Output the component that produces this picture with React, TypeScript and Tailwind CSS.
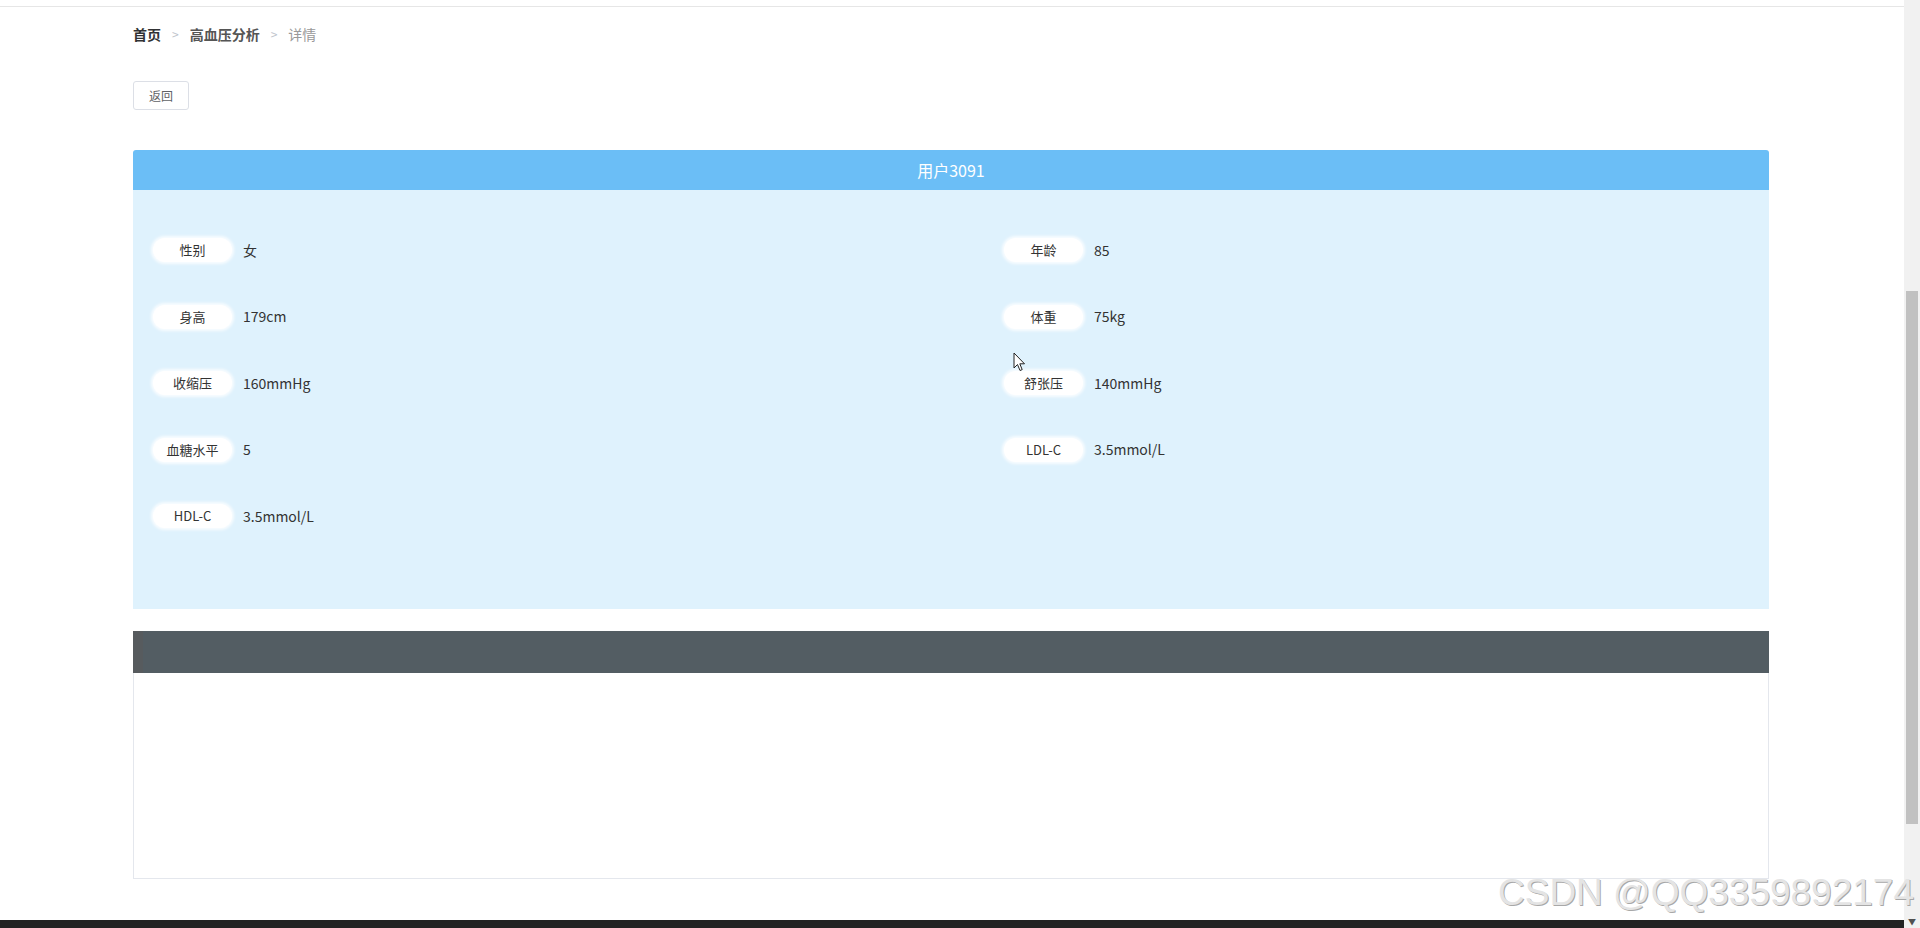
import React from "react";

const rows: [string, string][][] = [
  [["性别", "女"], ["年龄", "85"]],
  [["身高", "179cm"], ["体重", "75kg"]],
  [["收缩压", "160mmHg"], ["舒张压", "140mmHg"]],
  [["血糖水平", "5"], ["LDL-C", "3.5mmol/L"]],
  [["HDL-C", "3.5mmol/L"]],
];

function Item({ label, value }: { label: string; value: string }) {
  return (
    <div className="flex items-center h-[24px]">
      <div className="w-[79px] h-[24px] rounded-full bg-white shadow-[0_0_3px_2px_rgba(255,255,255,0.8)] flex items-center justify-center text-[13px] text-[#333]">
        {label}
      </div>
      <div className="ml-[11px] text-[14px] text-[#333]">{value}</div>
    </div>
  );
}

export default function App() {
  return (
    <div
      className="relative w-[1920px] h-[928px] overflow-hidden bg-white flex"
      style={{ fontFamily: '"Noto Sans CJK SC", "Noto Sans", sans-serif' }}
    >
      <div className="flex-1 flex flex-col">
        <div className="h-[7px] border-b border-[#e6e6e6]" />
        <div className="pl-[133px] pr-[135px] flex flex-col">
          <div className="mt-[19px] h-[16px] flex items-center text-[14px] leading-none">
            <span className="font-bold text-[#303133]">首页</span>
            <span className="mx-[11px] text-[#c0c4cc] text-[12px]">&gt;</span>
            <span className="font-bold text-[#555]">高血压分析</span>
            <span className="mx-[11px] text-[#c0c4cc] text-[12px]">&gt;</span>
            <span className="text-[#999]">详情</span>
          </div>
          <div className="mt-[39px]">
            <button className="h-[29px] w-[56px] border border-[#dcdfe6] rounded-[3px] bg-white text-[12px] text-[#606266] flex items-center justify-center">
              返回
            </button>
          </div>
          <div className="mt-[40px] h-[40px] bg-[#6bbef6] rounded-t-[3px] flex items-center justify-center text-white text-[16px]">
            用户3091
          </div>
          <div className="h-[419px] bg-[#dff2fd] pt-[48px] pl-[20px]">
            <div className="grid grid-cols-[851px_1fr] gap-y-[42.5px]">
              {rows.map((r, i) => (
                <React.Fragment key={i}>
                  {r.map(([l, v]) => (
                    <Item key={l} label={l} value={v} />
                  ))}
                </React.Fragment>
              ))}
            </div>
          </div>
          <div className="mt-[22px] h-[42px] bg-[#535d63] border-l-[10px] border-[#575b5e]" />
          <div className="h-[206px] border border-t-0 border-[#e4e7ed] bg-white" />
        </div>
        <div className="flex-1" />
        <div className="h-[8px] bg-[#232323]" />
      </div>
      <div className="w-[16px] bg-[#f1f1f1] flex flex-col">
        <div className="h-[291px]" />
        <div className="h-[533px] mx-[2px] bg-[#c1c1c1]" />
        <div className="flex-1" />
        <div className="h-[12px] flex items-center justify-center text-[8px] text-[#505050] leading-none">▼</div>
      </div>

      <div
        className="absolute right-[6px] top-[874px] text-[37px] leading-none text-[#e4e4e4] pointer-events-none"
        style={{
          fontFamily: '"Liberation Sans", Arial, sans-serif',
          textShadow: "1px 1px 0 #a8a8a8",
        }}
      >
        CSDN @QQ3359892174
      </div>

      <svg className="absolute left-[1013px] top-[352px]" width="13" height="20" viewBox="0 0 13 20">
        <path d="M1 1 L1 16 L4.5 12.5 L7 18.5 L9.2 17.6 L6.8 11.8 L11.5 11.8 Z" fill="white" stroke="#222" strokeWidth="1" strokeLinejoin="round" />
      </svg>
    </div>
  );
}
